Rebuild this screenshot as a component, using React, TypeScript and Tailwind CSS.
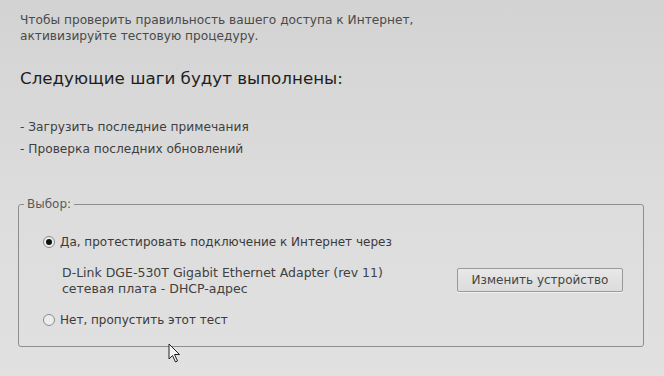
import React from 'react';

const font = { fontFamily: '"DejaVu Sans", Verdana, sans-serif' };

const Radio: React.FC<{ checked?: boolean }> = ({ checked }) => (
  <span className="w-[12px] h-[12px] rounded-full border border-[#8a8a8a] bg-[#ececec] flex items-center justify-center shrink-0">
    {checked && <span className="w-[6px] h-[6px] rounded-full bg-[#111]" />}
  </span>
);

const App: React.FC = () => {
  return (
    <div
      className="relative w-[664px] h-[376px] overflow-hidden bg-gradient-to-b from-[#d3d3d3] via-[#dcdcdc] to-[#e1e1e1] text-[#4a4a4a]"
      style={font}
    >
      <div className="pt-[12px] pl-[20px] pr-[20px] text-[12.2px] leading-[16px]">
        <p>Чтобы проверить правильность вашего доступа к Интернет,</p>
        <p>активизируйте тестовую процедуру.</p>
      </div>

      <h2 className="mt-[24px] pl-[20px] text-[16.7px] leading-[20px] text-[#1e1e1e]">
        Следующие шаги будут выполнены:
      </h2>

      <ul className="mt-[28px] pl-[20px] text-[12.2px] leading-[22px] text-[#3e3e3e]">
        <li>- Загрузить последние примечания</li>
        <li>- Проверка последних обновлений</li>
      </ul>

      <fieldset className="mt-[37px] ml-[18px] w-[626px] h-[150px] border border-[#8e8e8e] rounded-[3px] px-[24px]">
        <legend className="ml-[-19px] px-[3px] text-[12px] leading-[14px] text-[#5a5a5a]">Выбор:</legend>

        <div className="mt-[22px] flex items-center gap-[5px] text-[12px] text-[#3a3a3a]">
          <Radio checked />
          <span>Да, протестировать подключение к Интернет через</span>
        </div>

        <div className="mt-[14px] pl-[19px] flex items-center justify-between">
          <div className="text-[12.5px] leading-[16px] text-[#404040]">
            <p>D-Link DGE-530T Gigabit Ethernet Adapter (rev 11)</p>
            <p>сетевая плата - DHCP-адрес</p>
          </div>
          <button className="mr-[-4px] mb-[3px] w-[166px] h-[24px] border border-[#9a9a9a] rounded-[2px] bg-gradient-to-b from-[#e8e8e8] to-[#dcdcdc] text-[12px] text-[#444] shadow-[0_1px_0_#f0f0f0]">
            Изменить устройство
          </button>
        </div>

        <div className="mt-[14px] flex items-center gap-[5px] text-[12px] text-[#3a3a3a]">
          <Radio />
          <span>Нет, пропустить этот тест</span>
        </div>
      </fieldset>

      <svg className="absolute left-[168px] top-[343px]" width="14" height="20" viewBox="0 0 14 20">
        <path d="M1 1 L1 16 L4.5 12.5 L7.5 19 L9.5 18 L6.5 11.5 L11.5 11.5 Z" fill="#f4f4f4" stroke="#222" strokeWidth="1" strokeLinejoin="round" />
      </svg>
    </div>
  );
};

export default App;
